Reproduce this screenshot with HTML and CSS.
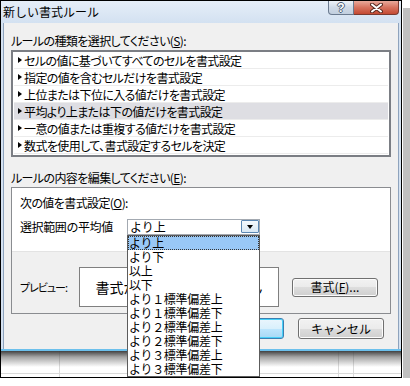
FILE: index.html
```html
<!DOCTYPE html>
<html>
<head>
    <meta charset="utf-8">
    <title>新しい書式ルール</title>
    <link rel="stylesheet" href="styles.css">
</head>
<body>
    <div class="shot">
        <div class="window">
            <!-- Title bar -->
            <div class="titlebar">
                <span class="title">新しい書式ルール</span>
                <div class="caption">
                    <span class="cap cap-help">?</span>
                    <span class="cap cap-close">
                        <svg width="13" height="10" viewBox="0 0 13 10">
                            <path d="M 2 1.5 L 11 8.5 M 11 1.5 L 2 8.5" stroke="#5a2a20" stroke-width="4" stroke-linecap="round" fill="none"/>
                            <path d="M 2 1.5 L 11 8.5 M 11 1.5 L 2 8.5" stroke="#fff" stroke-width="2" stroke-linecap="round" fill="none"/>
                        </svg>
                    </span>
                </div>
            </div>

            <div class="frame">
                <div class="client">
                    <div class="label">ルールの種類を選択してください(<u>S</u>):</div>
                    <ul class="rules">
                        <li>セルの値に基づいてすべてのセルを書式設定</li>
                        <li>指定の値を含むセルだけを書式設定</li>
                        <li>上位または下位に入る値だけを書式設定</li>
                        <li class="selected">平均より上または下の値だけを書式設定</li>
                        <li>一意の値または重複する値だけを書式設定</li>
                        <li>数式を使用して、書式設定するセルを決定</li>
                    </ul>

                    <div class="label label-gap">ルールの内容を編集してください(<u>E</u>):</div>
                    <div class="panel">
                        <div class="panel-top">
                            <div class="label">次の値を書式設定(<u>O</u>):</div>
                            <div class="field">
                                <span class="field-name">選択範囲の平均値</span>
                                <div class="combo-wrap">
                                    <div class="combo">
                                        <span>より上</span>
                                        <span class="combo-btn"></span>
                                    </div>
                                    <!-- open dropdown list -->
                                    <ul class="dropdown">
                                        <li class="current">より上</li>
                                        <li>より下</li>
                                        <li>以上</li>
                                        <li>以下</li>
                                        <li>より１標準偏差上</li>
                                        <li>より１標準偏差下</li>
                                        <li>より２標準偏差上</li>
                                        <li>より２標準偏差下</li>
                                        <li>より３標準偏差上</li>
                                        <li>より３標準偏差下</li>
                                    </ul>
                                </div>
                            </div>
                        </div>
                        <div class="panel-bottom">
                            <span class="preview-label">プレビュー:</span>
                            <div class="preview">書式が設定されていません</div>
                            <button class="btn btn-format">書式(<u>F</u>)...</button>
                        </div>
                    </div>

                    <div class="actions">
                        <button class="btn btn-default">OK</button>
                        <button class="btn">キャンセル</button>
                    </div>
                </div>
            </div>
        </div>
        <!-- worksheet behind the dialog -->
        <div class="sheet"></div>
    </div>
</body>
</html>
```

FILE: styles.css
```css
body {
    margin: 0;
    background: #fff;
    font-family: "Noto Sans CJK JP", sans-serif;
    font-size: 12px;
    color: #000;
}

.shot {
    position: relative;
    width: 402px;
    height: 378px;
    box-sizing: border-box;
    border: 1px solid #000;
    overflow: hidden;
    box-shadow: 1px 1px 0 #fff, 8px 8px 0 #c0c0c0;
}

.window {
    height: 350px;
    box-sizing: border-box;
    display: flex;
    flex-direction: column;
    background: #d5e2f1;
    border-bottom: 2px solid #6cc0ec;
}

/* title bar */
.titlebar {
    height: 22px;
    display: flex;
    justify-content: space-between;
    background: linear-gradient(#e6eef8, #d3e1f1);
}

.title {
    padding-left: 2px;
    line-height: 22px;
    font-size: 12px;
}

.caption {
    display: flex;
    align-self: flex-start;
    margin-right: 2px;
}

.cap {
    height: 14px;
    box-sizing: border-box;
    display: flex;
    align-items: center;
    justify-content: center;
    border: 1px solid #6b7a8f;
    border-top: none;
}

.cap-help {
    width: 26px;
    border-radius: 0 0 0 4px;
    background: linear-gradient(#eef2f8, #cfd9e6 50%, #c2cfdf);
    color: #fff;
    font-family: "Liberation Sans", sans-serif;
    font-weight: bold;
    font-size: 12px;
    text-shadow: 1px 0 #4c5d75, -1px 0 #4c5d75, 0 1px #4c5d75, 0 -1px #4c5d75;
}

.cap-close {
    width: 45px;
    border-left: none;
    border-color: #7a3a30;
    border-radius: 0 0 4px 0;
    background: linear-gradient(#e9a99b, #d7725e 50%, #c44a33);
}

/* frame + client */
.frame {
    flex: 1;
    display: flex;
    padding: 0 2px;
}

.client {
    flex: 1;
    background: #f0f0f0;
    border-left: 1px solid #8ea3bd;
    border-right: 1px solid #8ea3bd;
    padding: 11px 7px 0;
}

.label {
    line-height: 14px;
    height: 14px;
    white-space: nowrap;
    font-feature-settings: "palt";
    letter-spacing: -0.6px;
}

.label-gap {
    margin-top: 14px;
}

/* rule type list */
.rules {
    margin: 2px 0 0;
    padding: 0 1px 1px;
    list-style: none;
    background: #fff;
    border: 2px solid #7b7e84;
}

.rules li {
    height: 16px;
    display: flex;
    align-items: center;
    padding-left: 4px;
    border-bottom: 1px solid #ececec;
    white-space: nowrap;
    font-feature-settings: "palt";
    letter-spacing: -0.6px;
}

.rules li::before {
    content: "";
    border-left: 4px solid #000;
    border-top: 3px solid transparent;
    border-bottom: 3px solid transparent;
    margin-right: 2px;
}

.rules li.selected {
    background: #dedee3;
}

/* rule description panel */
.panel {
    margin-top: 2px;
    border: 1px solid #8a8c90;
}

.panel-top {
    background: #fff;
    padding: 8px 0 16px 8px;
    border-bottom: 1px solid #e3e3e3;
}

.field {
    display: flex;
    align-items: center;
    margin-top: 8px;
}

.field-name {
    width: 107px;
    letter-spacing: -0.4px;
}

.combo-wrap {
    position: relative;
}

.combo {
    width: 133px;
    height: 16px;
    box-sizing: border-box;
    display: flex;
    align-items: center;
    justify-content: space-between;
    padding-left: 2px;
    border: 1px solid #a3a9b1;
    background: #fff;
    line-height: 14px;
}

.combo-btn {
    width: 18px;
    height: 13px;
    box-sizing: border-box;
    display: flex;
    align-items: center;
    justify-content: center;
    border: 1px solid #5b87b3;
    border-radius: 1px;
    background: linear-gradient(#f4f9fd, #d9e8f5);
}

.combo-btn::after {
    content: "";
    border-top: 4px solid #000;
    border-left: 3.5px solid transparent;
    border-right: 3.5px solid transparent;
}

.dropdown {
    position: absolute;
    left: 0;
    top: 16px;
    z-index: 5;
    width: 133px;
    box-sizing: border-box;
    margin: 0;
    padding: 0;
    list-style: none;
    background: #fff;
    border: 1px solid #5c5c5c;
}

.dropdown li {
    height: 14px;
    line-height: 14px;
    padding-left: 1px;
    white-space: nowrap;
    letter-spacing: -0.3px;
}

.dropdown li.current {
    background: #99c8f6;
    outline: 1px dotted #333;
    outline-offset: -1px;
}

.panel-bottom {
    display: flex;
    align-items: center;
    padding: 15px 0 6px 8px;
    background: #f0f0f0;
}

.preview-label {
    width: 59px;
    font-size: 11px;
    font-feature-settings: "palt";
    letter-spacing: -1px;
}

.preview {
    width: 200px;
    height: 40px;
    box-sizing: border-box;
    display: flex;
    align-items: center;
    justify-content: center;
    border: 1px solid #7f7f7f;
    background: #fff;
    font-size: 14px;
    white-space: nowrap;
    overflow: hidden;
}

/* buttons */
.btn {
    width: 86px;
    height: 21px;
    box-sizing: border-box;
    padding: 0;
    font-family: "Noto Sans CJK JP", sans-serif;
    font-size: 12px;
    line-height: 14px;
    color: #000;
    border: 1px solid #707070;
    border-radius: 3px;
    background: linear-gradient(#f2f2f2, #ebebeb 50%, #dddddd 50%, #cfcfcf);
    box-shadow: inset 0 0 0 1px #fcfcfc;
}

.btn-format {
    height: 19px;
    margin-left: 13px;
}

.btn-default {
    border-color: #3c7fb1;
    box-shadow: inset 0 0 0 1px #48d0f8;
    background: linear-gradient(#eaf6fd, #d9f0fc 50%, #bee6fd 50%, #a7d9f5);
}

.actions {
    display: flex;
    justify-content: flex-end;
    gap: 14px;
    margin-top: 4px;
    padding-right: 7px;
}

/* worksheet with the dialog shadow */
.sheet {
    height: 26px;
    background:
        linear-gradient(rgba(55, 55, 55, 0.95), rgba(90, 90, 90, 0.55) 6px, rgba(255, 255, 255, 0) 16px),
        linear-gradient(#dadada, #dadada) 58px 0 / 1px 100% no-repeat,
        linear-gradient(#dadada, #dadada) 337px 0 / 1px 100% no-repeat,
        linear-gradient(#dadada, #dadada) 352px 0 / 1px 100% no-repeat,
        linear-gradient(#dadada, #dadada) 0 22px / 100% 1px no-repeat,
        #fff;
}
```
